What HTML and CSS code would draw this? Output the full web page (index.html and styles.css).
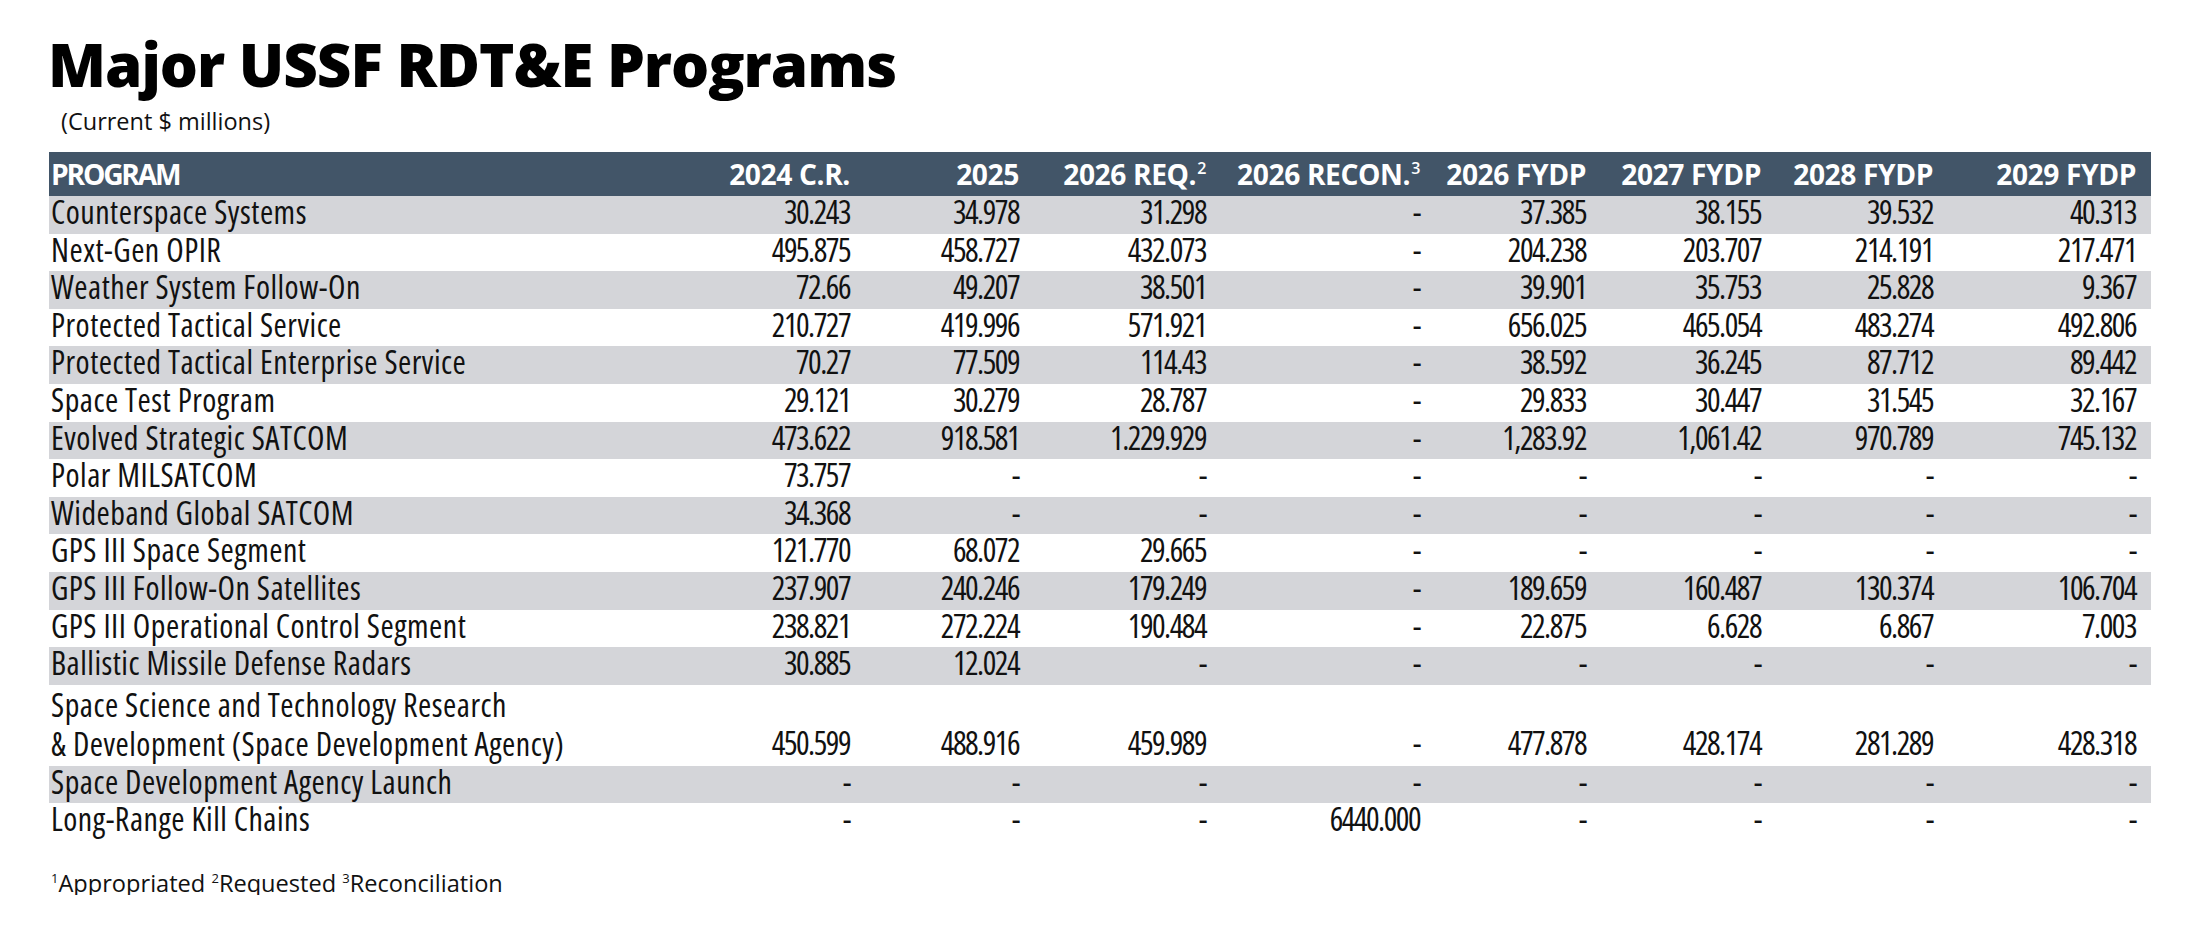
FILE: index.html
```html
<!DOCTYPE html>
<html lang="en">
<head>
<meta charset="utf-8">
<title>Major USSF RDT&amp;E Programs</title>
<link rel="stylesheet" href="styles.css">
</head>
<body>
<div class="page">
  <h1 class="title">Major USSF RDT&amp;E Programs</h1>
  <p class="subtitle">(Current $ millions)</p>
  <table class="data">
    <colgroup>
      <col class="c-name"><col class="c1"><col class="c2"><col class="c3"><col class="c4"><col class="c5"><col class="c6"><col class="c7"><col class="c8">
    </colgroup>
    <thead>
      <tr>
        <th class="name">PROGRAM</th>
        <th>2024 C.R.</th>
        <th>2025</th>
        <th>2026 REQ.<sup>2</sup></th>
        <th>2026 RECON.<sup>3</sup></th>
        <th>2026 FYDP</th>
        <th>2027 FYDP</th>
        <th>2028 FYDP</th>
        <th>2029 FYDP</th>
      </tr>
    </thead>
    <tbody>
      <tr class="alt"><td class="name">Counterspace Systems</td><td>30.243</td><td>34.978</td><td>31.298</td><td>-</td><td>37.385</td><td>38.155</td><td>39.532</td><td>40.313</td></tr>
      <tr><td class="name">Next-Gen OPIR</td><td>495.875</td><td>458.727</td><td>432.073</td><td>-</td><td>204.238</td><td>203.707</td><td>214.191</td><td>217.471</td></tr>
      <tr class="alt"><td class="name">Weather System Follow-On</td><td>72.66</td><td>49.207</td><td>38.501</td><td>-</td><td>39.901</td><td>35.753</td><td>25.828</td><td>9.367</td></tr>
      <tr><td class="name">Protected Tactical Service</td><td>210.727</td><td>419.996</td><td>571.921</td><td>-</td><td>656.025</td><td>465.054</td><td>483.274</td><td>492.806</td></tr>
      <tr class="alt"><td class="name">Protected Tactical Enterprise Service</td><td>70.27</td><td>77.509</td><td>114.43</td><td>-</td><td>38.592</td><td>36.245</td><td>87.712</td><td>89.442</td></tr>
      <tr><td class="name">Space Test Program</td><td>29.121</td><td>30.279</td><td>28.787</td><td>-</td><td>29.833</td><td>30.447</td><td>31.545</td><td>32.167</td></tr>
      <tr class="alt"><td class="name">Evolved Strategic SATCOM</td><td>473.622</td><td>918.581</td><td>1.229.929</td><td>-</td><td>1,283.92</td><td>1,061.42</td><td>970.789</td><td>745.132</td></tr>
      <tr><td class="name">Polar MILSATCOM</td><td>73.757</td><td>-</td><td>-</td><td>-</td><td>-</td><td>-</td><td>-</td><td>-</td></tr>
      <tr class="alt"><td class="name">Wideband Global SATCOM</td><td>34.368</td><td>-</td><td>-</td><td>-</td><td>-</td><td>-</td><td>-</td><td>-</td></tr>
      <tr><td class="name">GPS III Space Segment</td><td>121.770</td><td>68.072</td><td>29.665</td><td>-</td><td>-</td><td>-</td><td>-</td><td>-</td></tr>
      <tr class="alt"><td class="name">GPS III Follow-On Satellites</td><td>237.907</td><td>240.246</td><td>179.249</td><td>-</td><td>189.659</td><td>160.487</td><td>130.374</td><td>106.704</td></tr>
      <tr><td class="name">GPS III Operational Control Segment</td><td>238.821</td><td>272.224</td><td>190.484</td><td>-</td><td>22.875</td><td>6.628</td><td>6.867</td><td>7.003</td></tr>
      <tr class="alt"><td class="name">Ballistic Missile Defense Radars</td><td>30.885</td><td>12.024</td><td>-</td><td>-</td><td>-</td><td>-</td><td>-</td><td>-</td></tr>
      <tr class="tall"><td class="name">Space Science and Technology Research<br>&amp; Development (Space Development Agency)</td><td>450.599</td><td>488.916</td><td>459.989</td><td>-</td><td>477.878</td><td>428.174</td><td>281.289</td><td>428.318</td></tr>
      <tr class="alt"><td class="name">Space Development Agency Launch</td><td>-</td><td>-</td><td>-</td><td>-</td><td>-</td><td>-</td><td>-</td><td>-</td></tr>
      <tr><td class="name">Long-Range Kill Chains</td><td>-</td><td>-</td><td>-</td><td>6440.000</td><td>-</td><td>-</td><td>-</td><td>-</td></tr>
    </tbody>
  </table>
  <p class="notes"><sup>1</sup>Appropriated <sup>2</sup>Requested <sup>3</sup>Reconciliation</p>
</div>
</body>
</html>
```
FILE: styles.css
```css
html, body {
  margin: 0;
  padding: 0;
  background: #ffffff;
}

body {
  font-family: "Open Sans", "Liberation Sans", sans-serif;
  font-stretch: 75%;
  color: #111111;
}

.page {
  padding-top: 34px;
}

.title {
  margin: 0 0 0 48px;
  font-size: 60px;
  line-height: 60px;
  font-weight: 800;
  font-stretch: 100%;
  letter-spacing: -1px;
  color: #000000;
}

.subtitle {
  margin: 15px 0 0 61px;
  font-size: 23.5px;
  line-height: 24px;
  font-weight: 400;
  font-stretch: 100%;
  letter-spacing: 0;
  color: #111111;
}

.data {
  margin: 19px 0 0 49px;
  width: 2102px;
  table-layout: fixed;
  border-collapse: collapse;
  border-spacing: 0;
}

.c-name { width: 560px; }
.c1 { width: 256px; }
.c2 { width: 169px; }
.c3 { width: 187px; }
.c4 { width: 214px; }
.c5 { width: 166px; }
.c6 { width: 175px; }
.c7 { width: 172px; }
.c8 { width: 203px; }

.data th,
.data td {
  padding: 0 15px 0 0;
  text-align: right;
  white-space: nowrap;
}

.data th {
  background: #425568;
  color: #ffffff;
  font-size: 28.2px;
  line-height: 44px;
  height: 44px;
  font-weight: 700;
  font-stretch: 100%;
  letter-spacing: -0.4px;
}

.data th sup {
  font-size: 16px;
  line-height: 0;
  vertical-align: 11px;
  font-weight: 600;
  margin-left: 1px;
}

.data td {
  font-size: 32px;
  line-height: 32.6px;
  height: 32.6px;
  padding-bottom: 5px;
  font-weight: 400;
  letter-spacing: -1.5px;
  color: #111111;
}

.data td.name {
  text-align: left;
  padding-left: 2px;
  padding-right: 0;
  letter-spacing: 0.5px;
}

.data th.name {
  text-align: left;
  padding-left: 2px;
  padding-right: 0;
  letter-spacing: -2.2px;
}

.data tr.alt td {
  background: #d4d5d9;
}

.data tr.tall td {
  height: 76px;
  vertical-align: bottom;
  line-height: 36px;
  padding-bottom: 5px;
}

.data tr.tall td.name {
  line-height: 39px;
  vertical-align: middle;
  padding-bottom: 3px;
}

.notes {
  margin: 30px 0 0 51px;
  font-size: 23.6px;
  line-height: 24px;
  font-stretch: 100%;
  letter-spacing: 0;
  color: #111111;
}

.notes sup {
  font-size: 13px;
  line-height: 0;
  vertical-align: 9px;
}
```
